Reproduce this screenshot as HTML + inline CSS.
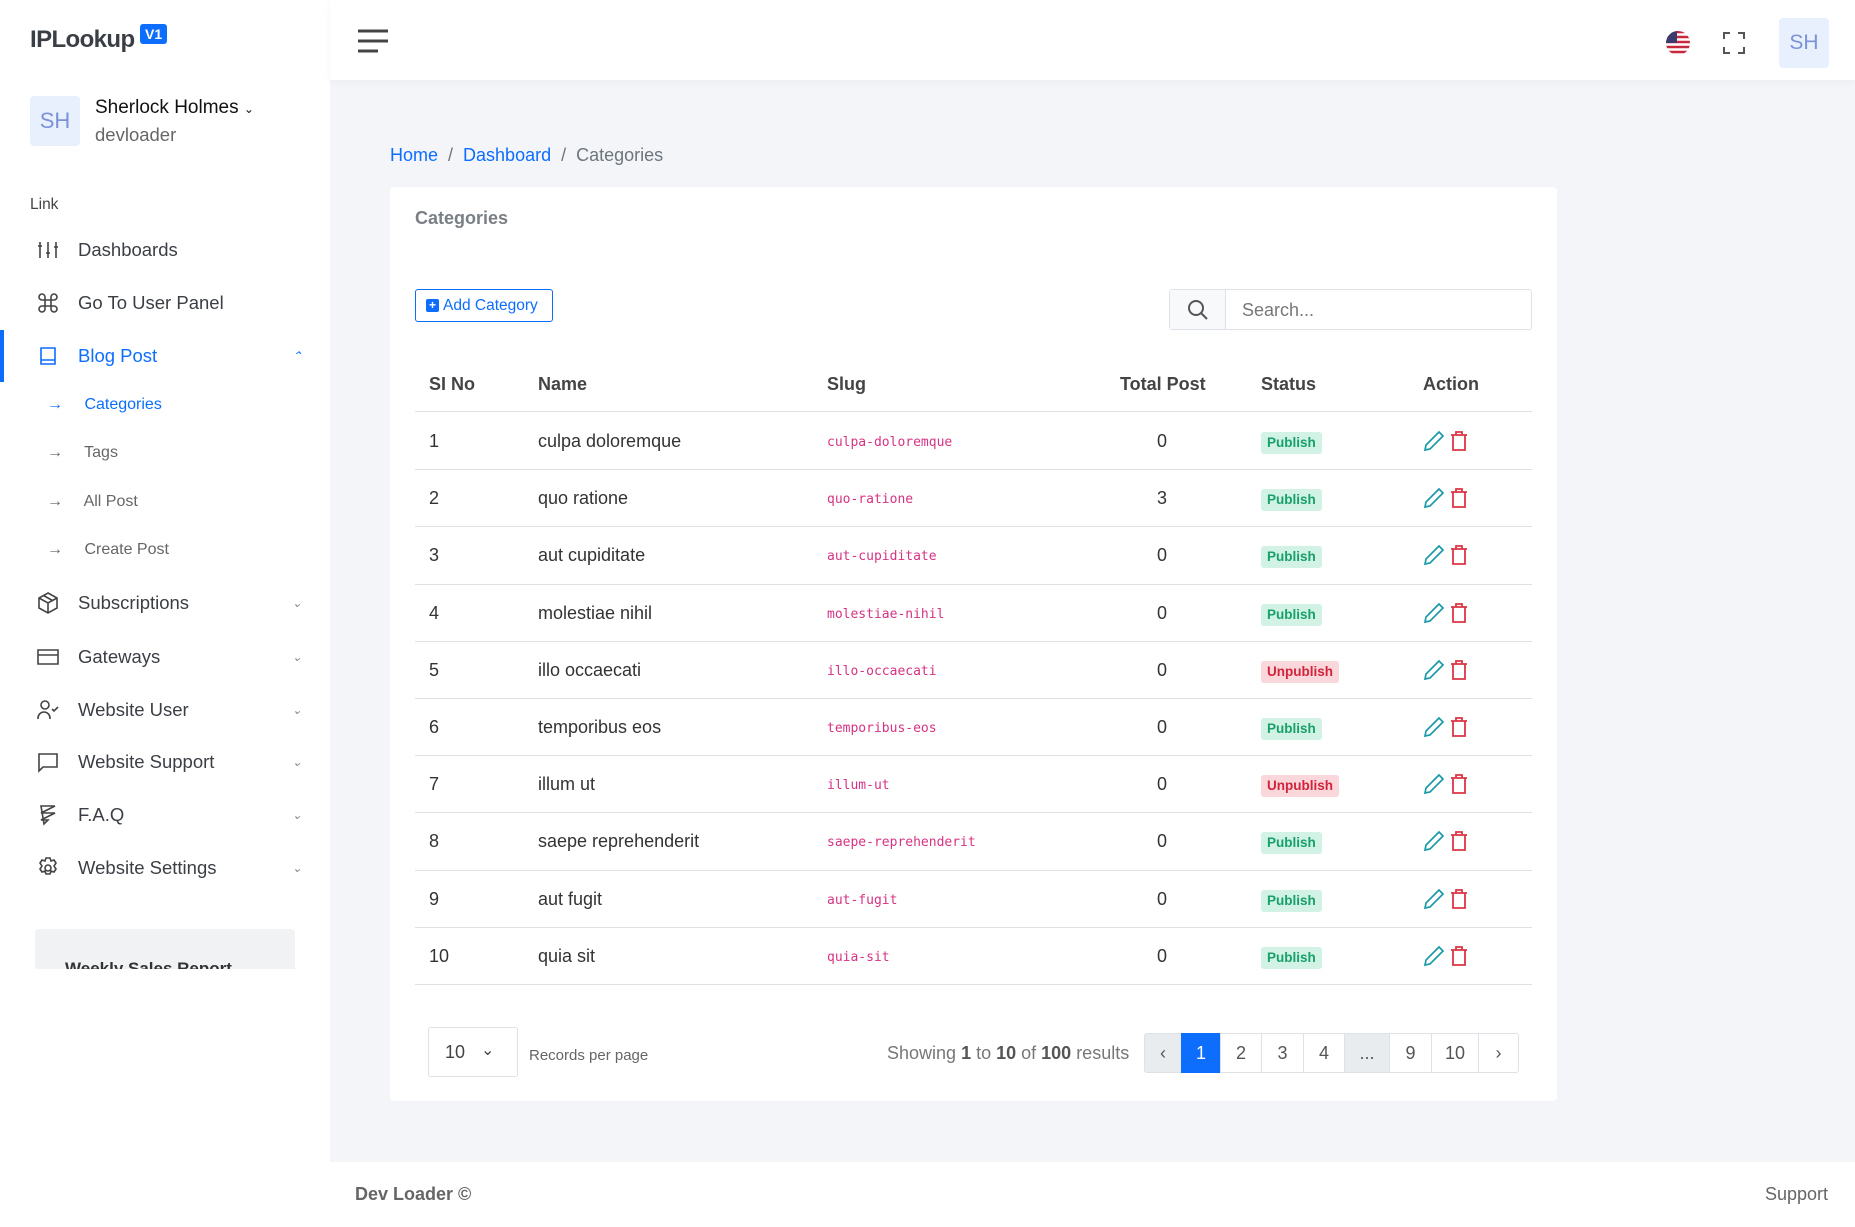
<!DOCTYPE html>
<html><head><meta charset="utf-8"><style>
*{box-sizing:border-box;margin:0;padding:0}
body{width:1855px;height:1227px;overflow:hidden;background:#f4f5f8;font-family:"Liberation Sans",sans-serif;color:#333;position:relative}
.abs{position:absolute}
.side{left:0;top:0;width:330px;height:1227px;background:#fff}
.top{left:330px;top:0;width:1525px;height:80px;background:#fff;box-shadow:0 2px 8px rgba(0,0,0,.04)}
.mi{position:absolute;left:0;width:330px;height:40px;display:flex;align-items:center;font-size:18.5px;color:#3b3f45}
.mi svg{position:absolute;left:36px;width:24px;height:24px;fill:none;stroke:#444;stroke-width:1.6}
.mi span{position:absolute;left:78px}
.mi .ch{position:absolute;left:292px;font-size:12px;color:#888}
.sub{position:absolute;left:47px;font-size:16px;color:#666}
.sub b{font-weight:normal;display:inline-block;width:33px;color:#666}
.card{left:390px;top:187px;width:1167px;height:914px;background:#fff;border-radius:4px}
.row{position:absolute;left:25px;width:1117px;height:57.2px;border-bottom:1px solid #dee2e6;font-size:18px;color:#333}
.row > div{position:absolute;top:0;line-height:56px}
.slug{font-family:"DejaVu Sans Mono",monospace;font-size:13px;color:#d63384}
.row > .badge{font-size:13.5px;font-weight:bold;padding:3px 6px;border-radius:3px;line-height:16px;top:19px}
.pub{background:#d1f2e5;color:#18a06a}
.unp{background:#f9d7da;color:#d3233c}
.row > .act{top:17px;line-height:0;width:60px;height:24px}
.pg{position:absolute;top:1033px;height:40px;border:1px solid #dee2e6;display:flex;align-items:center;justify-content:center;font-size:18px;color:#555;background:#fff}
</style></head><body>
<div class="abs side"></div>
<div class="abs top"></div>
<div class="abs" style="left:30px;top:26px;font-size:24px;font-weight:bold;color:#3a3f46;letter-spacing:-0.6px">IPLookup</div>
<div class="abs" style="left:140px;top:24px;background:#0d6efd;color:#fff;font-size:14px;font-weight:bold;padding:2px 5px;border-radius:3px">V1</div>
<div class="abs" style="left:30px;top:96px;width:50px;height:50px;background:#e8f0fe;border-radius:4px;color:#7b93d6;font-size:22px;display:flex;align-items:center;justify-content:center">SH</div>
<div class="abs" style="left:95px;top:97px;font-size:19px;color:#111">Sherlock Holmes <span style="font-size:12px">&#8964;</span></div>
<div class="abs" style="left:95px;top:124px;font-size:18.5px;color:#666">devloader</div>
<div class="abs" style="left:30px;top:196px;font-size:15.5px;color:#444">Link</div>

<div class="mi" style="top:230px"><svg viewBox="0 0 24 24"><path d="M4 4v16M12 4v16M20 4v16M2 8h4M10 15h4M18 9h4"/></svg><span>Dashboards</span></div>
<div class="mi" style="top:283px"><svg viewBox="0 0 24 24"><path d="M9 9V6a3 3 0 1 0-3 3h12a3 3 0 1 0-3-3v12a3 3 0 1 0 3-3H6a3 3 0 1 0 3 3z"/></svg><span>Go To User Panel</span></div>
<div class="abs" style="left:0;top:330px;width:4px;height:52px;background:#0d6efd"></div>
<div class="mi" style="top:336px;color:#0d6efd"><svg viewBox="0 0 24 24" style="stroke:#0d6efd"><path d="M5 4h14v16H5zM5 16h14"/></svg><span>Blog Post</span><i class="ch" style="color:#0d6efd">&#8963;</i></div>
<div class="sub" style="top:396px;color:#0d6efd"><b style="color:#0d6efd">&rarr;</b> Categories</div>
<div class="sub" style="top:444px"><b>&rarr;</b> Tags</div>
<div class="sub" style="top:493px"><b>&rarr;</b> All Post</div>
<div class="sub" style="top:541px"><b>&rarr;</b> Create Post</div>
<div class="mi" style="top:583px"><svg viewBox="0 0 24 24"><path d="M12 2l9 5v10l-9 5-9-5V7zM3 7l9 5 9-5M12 12v10M7.5 4.5l9 5"/></svg><span>Subscriptions</span><i class="ch">&#8964;</i></div>
<div class="mi" style="top:637px"><svg viewBox="0 0 24 24"><path d="M2 5h20v14H2zM2 10h20"/></svg><span>Gateways</span><i class="ch">&#8964;</i></div>
<div class="mi" style="top:690px"><svg viewBox="0 0 24 24"><circle cx="9" cy="7" r="4"/><path d="M2 21v-1a6 6 0 0 1 12 0v1M16 11l2 2 4-4"/></svg><span>Website User</span><i class="ch">&#8964;</i></div>
<div class="mi" style="top:742px"><svg viewBox="0 0 24 24"><path d="M3 4h18v13H7l-4 4z"/></svg><span>Website Support</span><i class="ch">&#8964;</i></div>
<div class="mi" style="top:795px"><svg viewBox="0 0 24 24"><path d="M5 3h14l-14 7h14L5 17h7l-4 4z"/></svg><span>F.A.Q</span><i class="ch">&#8964;</i></div>
<div class="mi" style="top:848px"><svg viewBox="0 0 24 24"><circle cx="12" cy="12" r="3"/><path d="M10 2h4l1 3 3-1 2 3-2 3 2 3-2 3-3-1-1 3h-4l-1-3-3 1-2-3 2-3-2-3 2-3 3 1z"/></svg><span>Website Settings</span><i class="ch">&#8964;</i></div>
<div class="abs" style="left:35px;top:929px;width:260px;height:40px;background:#f1f2f4;border-radius:4px 4px 0 0;overflow:hidden"><div style="position:absolute;left:30px;top:30px;font-size:17px;font-weight:bold;color:#333">Weekly Sales Report</div></div>

<svg class="abs" style="left:358px;top:28px" width="30" height="26"><path d="M0 3h30M0 13h30M0 23h20" stroke="#444" stroke-width="3"/></svg>
<svg class="abs" style="left:1665px;top:30px" width="26" height="26" viewBox="0 0 26 26"><clipPath id="c"><circle cx="13" cy="13" r="12"/></clipPath><g clip-path="url(#c)"><rect width="26" height="26" fill="#fff"/><path d="M0 2h26M0 7h26M0 12h26M0 17h26M0 22h26" stroke="#c8283c" stroke-width="2.5"/><rect width="12" height="13" fill="#3c3b6e"/></g></svg>
<svg class="abs" style="left:1723px;top:32px" width="22" height="22" fill="none" stroke="#555" stroke-width="2"><path d="M1 7V1h6M15 1h6v6M21 15v6h-6M7 21H1v-6"/></svg>
<div class="abs" style="left:1779px;top:18px;width:50px;height:50px;background:#e8f0fe;border-radius:4px;color:#7b93d6;font-size:21px;display:flex;align-items:center;justify-content:center">SH</div>

<div class="abs" style="left:390px;top:145px;font-size:18px;color:#6c757d"><span style="color:#0d6efd">Home</span> &nbsp;/&nbsp; <span style="color:#0d6efd">Dashboard</span> &nbsp;/&nbsp; Categories</div>

<div class="abs card">
<div class="abs" style="left:25px;top:21px;font-size:18px;font-weight:bold;color:#7a7f85">Categories</div>
<div class="abs" style="left:25px;top:102px;width:138px;height:33px;border:1px solid #0d6efd;border-radius:3px;color:#0d6efd;font-size:15.5px;display:flex;align-items:center;padding-left:10px"><span style="display:inline-block;width:13px;height:13px;background:#0d6efd;color:#fff;font-size:12px;line-height:13px;text-align:center;border-radius:2px;margin-right:4px;font-weight:bold">+</span>Add Category</div>
<div class="abs" style="left:779px;top:102px;width:363px;height:41px;border:1px solid #dee2e6;border-radius:3px"><div style="position:absolute;left:0;top:0;width:56px;height:39px;border-right:1px solid #dee2e6;background:#f8f9fa"></div>
<svg style="position:absolute;left:17px;top:9px" width="22" height="22" fill="none" stroke="#555" stroke-width="2"><circle cx="9" cy="9" r="7"/><path d="M14 14l6 6"/></svg>
<div style="position:absolute;left:72px;top:10px;font-size:18px;color:#777">Search...</div></div>
<div class="abs" style="left:25px;top:182px;width:1117px;height:43px;border-bottom:1px solid #dee2e6;font-size:18px;font-weight:bold;color:#444">
<div class="abs" style="left:14px;top:5px">SI No</div><div class="abs" style="left:123px;top:5px">Name</div><div class="abs" style="left:412px;top:5px">Slug</div><div class="abs" style="left:705px;top:5px">Total Post</div><div class="abs" style="left:846px;top:5px">Status</div><div class="abs" style="left:1008px;top:5px">Action</div></div>
<div id="rows"></div>
<div class="abs" style="left:38px;top:840px;width:90px;height:50px;border:1px solid #dee2e6;border-radius:3px;font-size:18px;color:#444;padding:14px 0 0 16px">10 <span style="position:absolute;left:52px;top:12px;font-size:16px">&#8964;</span></div>
<div class="abs" style="left:139px;top:860px;font-size:15px;color:#666">Records per page</div>
<div class="abs" style="left:497px;top:856px;font-size:18px;color:#777">Showing <b style="color:#555">1</b> to <b style="color:#555">10</b> of <b style="color:#555">100</b> results</div>
</div>
<div class="pg" style="left:1144px;width:38px;background:#e9ecef;border-radius:3px 0 0 3px">&lsaquo;</div>
<div class="pg" style="left:1181px;width:40px;background:#0d6efd;color:#fff;border-color:#0d6efd">1</div>
<div class="pg" style="left:1220px;width:42px">2</div>
<div class="pg" style="left:1261px;width:43px">3</div>
<div class="pg" style="left:1303px;width:42px">4</div>
<div class="pg" style="left:1344px;width:46px;background:#e9ecef">...</div>
<div class="pg" style="left:1389px;width:43px">9</div>
<div class="pg" style="left:1431px;width:48px">10</div>
<div class="pg" style="left:1478px;width:41px;border-radius:0 3px 3px 0">&rsaquo;</div>

<div class="abs" style="left:330px;top:1162px;width:1525px;height:65px;background:#fff"></div>
<div class="abs" style="left:355px;top:1184px;font-size:18px;font-weight:bold;color:#666">Dev Loader ©</div>
<div class="abs" style="left:1765px;top:1184px;font-size:18px;color:#666">Support</div>

<script>
var d=[["culpa doloremque",0,1],["quo ratione",3,1],["aut cupiditate",0,1],["molestiae nihil",0,1],["illo occaecati",0,0],["temporibus eos",0,1],["illum ut",0,0],["saepe reprehenderit",0,1],["aut fugit",0,1],["quia sit",0,1]];
var h="";
d.forEach(function(r,i){var s=r[0].replace(/ /g,"-");
h+='<div class="row" style="top:'+(226+i*57.2)+'px"><div style="left:14px">'+(i+1)+'</div><div style="left:123px">'+r[0]+'</div><div class="slug" style="left:412px;top:2px">'+s+'</div><div style="left:742px">'+r[1]+'</div><div class="badge '+(r[2]?'pub':'unp')+'" style="left:846px">'+(r[2]?'Publish':'Unpublish')+'</div>'+
'<div class="act" style="left:1008px"><svg width="22" height="22" fill="none" stroke="#1a9aa8" stroke-width="1.7" style="position:absolute;left:0;top:0"><path d="M16 2l4 4L7 19l-5 1 1-5z"/></svg><svg width="20" height="22" fill="none" stroke="#dc3545" stroke-width="1.8" style="position:absolute;left:26px;top:0"><path d="M2 5h16M7 5V2h6v3M4 5v15h12V5"/></svg></div></div>';});
document.getElementById("rows").innerHTML=h;
</script>
</body></html>
